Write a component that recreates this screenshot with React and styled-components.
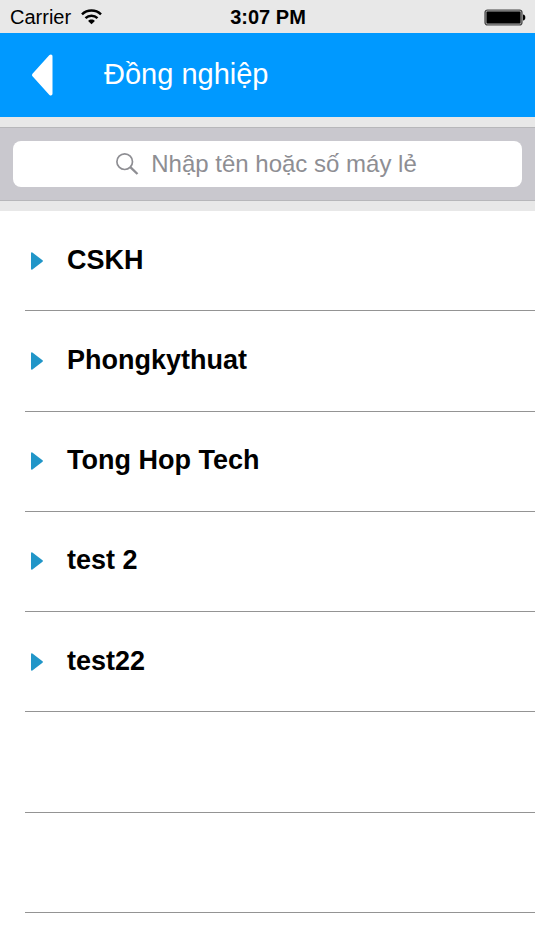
import React from "react";
import styled, { createGlobalStyle } from "styled-components";

const GlobalStyle = createGlobalStyle`
  *, *::before, *::after { box-sizing: border-box; }
  body {
    margin: 0;
    background: #ffffff;
    color: #000000;
    font-family: "Liberation Sans", Helvetica, Arial, sans-serif;
  }
`;

const Screen = styled.div`
  display: flex;
  flex-direction: column;
  min-height: 100vh;
`;

const StatusBar = styled.div`
  display: grid;
  grid-template-columns: 1fr auto 1fr;
  align-items: center;
  height: 33px;
  padding: 1px 9px 0 10px;
  background: #e8e8e8;
  font-size: 20px;
  line-height: 24px;
`;

const Carrier = styled.div`
  display: flex;
  align-items: center;
  gap: 10px;
`;

const Clock = styled.time`
  font-weight: 700;
`;

const BatteryIcon = styled.svg`
  justify-self: end;
`;

const NavBar = styled.header`
  display: flex;
  align-items: center;
  gap: 43px;
  height: 84px;
  padding: 0 24px;
  background: #0099ff;
  color: #ffffff;
`;

const BackButton = styled.button`
  display: flex;
  padding: 0 8px;
  border: 0;
  background: none;
  color: inherit;
  cursor: pointer;
`;

const Title = styled.h1`
  margin: 0;
  padding-bottom: 2px;
  font-size: 29px;
  font-weight: 400;
  line-height: 36px;
`;

const SearchSection = styled.div`
  padding: 10px 0;
  background: #e8e8e8;
`;

const SearchBar = styled.form`
  padding: 13px;
  border-top: 1px solid #b7b7ba;
  border-bottom: 1px solid #b7b7ba;
  background: #c9c8ce;
`;

const SearchField = styled.label`
  display: flex;
  align-items: center;
  justify-content: center;
  gap: 12px;
  height: 46px;
  border-radius: 8px;
  background: #ffffff;
  color: #8e8e93;
  cursor: text;
`;

const SearchInput = styled.input`
  field-sizing: content;
  min-width: 0;
  padding: 0 2px 0 0;
  border: 0;
  outline: 0;
  background: none;
  color: #000000;
  font: inherit;
  font-size: 24px;
  line-height: 32px;

  &::placeholder {
    color: #8e8e93;
    opacity: 1;
  }
`;

const GroupList = styled.ul`
  display: grid;
  flex: 1;
  grid-auto-rows: minmax(100px, 1fr);
  margin: 0;
  padding: 0 0 37px 25px;
  list-style: none;
`;

const GroupItem = styled.li`
  display: flex;
  border-bottom: 1px solid #949494;
`;

const GroupButton = styled.button`
  display: flex;
  flex: 1;
  align-items: center;
  gap: 24px;
  padding: 0 6px;
  border: 0;
  background: none;
  color: #000000;
  font: inherit;
  text-align: left;
  cursor: pointer;
`;

const GroupName = styled.span`
  padding-bottom: 2px;
  font-size: 27px;
  font-weight: 700;
  line-height: 32px;
`;

const groups = ["CSKH", "Phongkythuat", "Tong Hop Tech", "test 2", "test22"];
const emptyRows = ["empty-1", "empty-2"];

function Wifi() {
  return (
    <svg width="21" height="16" viewBox="0 0 21 16" fill="none" stroke="#000" strokeWidth="2.5" aria-hidden="true">
      <path d="M1 5.4C6.3.3 14.7.3 20 5.4" />
      <path d="M4.5 9.1c3.4-3.3 8.6-3.3 12 0" />
      <path d="M10.5 15.3 7.1 12c1.9-1.9 4.9-1.9 6.8 0Z" fill="#000" stroke="none" />
    </svg>
  );
}

function Battery() {
  return (
    <BatteryIcon width="42" height="17" viewBox="0 0 42 17" role="img" aria-label="Battery full">
      <rect x="1" y="1" width="37" height="15" rx="2.5" fill="#a8a8a8" stroke="#444" strokeWidth="1.2" />
      <rect x="2.5" y="2.5" width="34" height="12" rx="1" fill="#000" />
      <path d="M39 5.5c1.7.2 2.3 1.3 2.3 3s-.6 2.8-2.3 3Z" fill="#000" />
    </BatteryIcon>
  );
}

function BackArrow() {
  return (
    <svg width="21" height="42" viewBox="0 0 21 42" fill="#fff" aria-hidden="true">
      <path d="M.5 19.7 17.2 1.3C18.6-.2 20.5.3 20.5 2.4v37.2c0 2.1-1.9 2.6-3.3 1.1L.5 22.3q-1-1.3 0-2.6Z" />
    </svg>
  );
}

function SearchIcon() {
  return (
    <svg width="23" height="22" viewBox="0 0 23 22" fill="none" stroke="#8e8e93" aria-hidden="true">
      <circle cx="8.7" cy="8.7" r="7.8" strokeWidth="1.7" />
      <path d="m14.3 14.2 7.2 6.8" strokeWidth="2.4" />
    </svg>
  );
}

function Disclosure() {
  return (
    <svg width="12" height="18" viewBox="0 0 12 18" fill="#2196c8" aria-hidden="true">
      <path d="M0 1.2Q.2-.2 1.4.5L11.5 8.3q.8.7 0 1.4L1.4 17.5Q.2 18.2 0 16.8Z" />
    </svg>
  );
}

export default function App() {
  return (
    <Screen>
      <GlobalStyle />
      <StatusBar>
        <Carrier>
          Carrier
          <Wifi />
        </Carrier>
        <Clock dateTime="15:07">3:07 PM</Clock>
        <Battery />
      </StatusBar>
      <NavBar>
        <BackButton type="button" aria-label="Quay lại">
          <BackArrow />
        </BackButton>
        <Title>Đồng nghiệp</Title>
      </NavBar>
      <SearchSection>
        <SearchBar role="search" onSubmit={(event) => event.preventDefault()}>
          <SearchField>
            <SearchIcon />
            <SearchInput
              type="text"
              aria-label="Nhập tên hoặc số máy lẻ"
              placeholder="Nhập tên hoặc số máy lẻ"
            />
          </SearchField>
        </SearchBar>
      </SearchSection>
      <GroupList>
        {groups.map((name) => (
          <GroupItem key={name}>
            <GroupButton type="button" aria-expanded="false">
              <Disclosure />
              <GroupName>{name}</GroupName>
            </GroupButton>
          </GroupItem>
        ))}
        {emptyRows.map((id) => (
          <GroupItem key={id} aria-hidden="true" />
        ))}
      </GroupList>
    </Screen>
  );
}
